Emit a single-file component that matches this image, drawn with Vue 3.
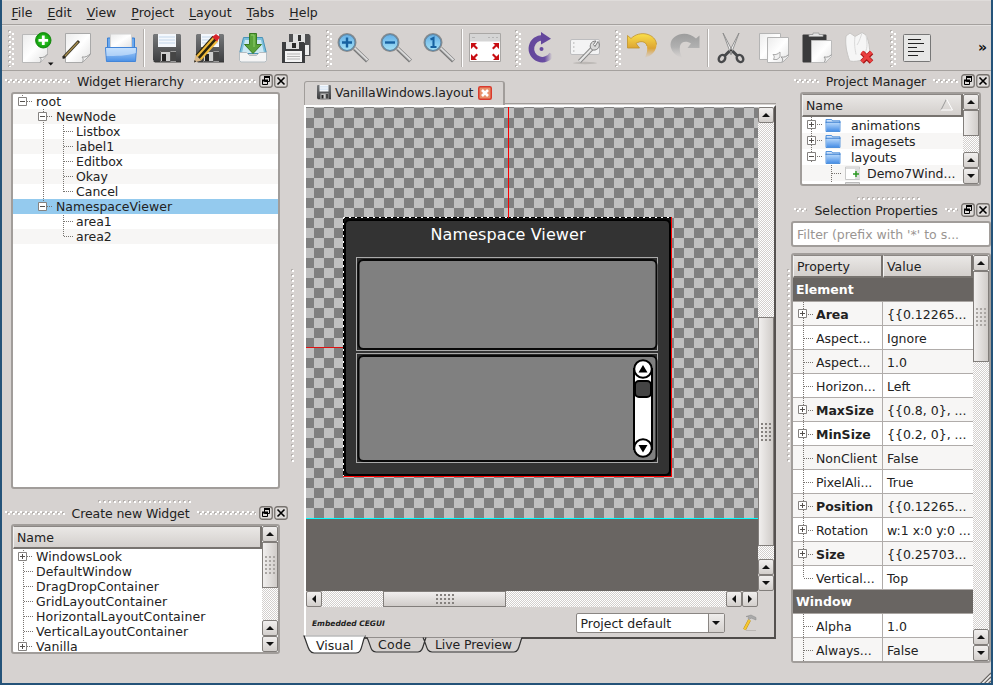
<script setup>
const menus = ['File', 'Edit', 'View', 'Project', 'Layout', 'Tabs', 'Help']

const toolbar = [
  'grip', 'new', 'edit', 'open', 'sep', 'save', 'saveas', 'import', 'saveall',
  'grip', 'zoomin', 'zoomout', 'zoomone', 'sep', 'fullscreen',
  'grip', 'reload', 'configure',
  'grip', 'undo', 'redo', 'sep', 'cut', 'copy', 'paste', 'delete',
  'grip', 'text',
]

const hierarchy = [
  { label: 'root', level: 0 },
  { label: 'NewNode', level: 1 },
  { label: 'Listbox', level: 2 },
  { label: 'label1', level: 2 },
  { label: 'Editbox', level: 2 },
  { label: 'Okay', level: 2 },
  { label: 'Cancel', level: 2 },
  { label: 'NamespaceViewer', level: 1, selected: true },
  { label: 'area1', level: 2 },
  { label: 'area2', level: 2 },
]

const widgets = [
  'WindowsLook', 'DefaultWindow', 'DragDropContainer', 'GridLayoutContainer',
  'HorizontalLayoutContainer', 'VerticalLayoutContainer', 'Vanilla',
]

const folders = ['animations', 'imagesets', 'layouts']

const properties = [
  { group: 'Element' },
  { name: 'Area', value: '{{0.12265...', open: true, bold: true },
  { name: 'Aspect...', value: 'Ignore' },
  { name: 'Aspect...', value: '1.0' },
  { name: 'Horizon...', value: 'Left' },
  { name: 'MaxSize', value: '{{0.8, 0}, ...', open: true, bold: true },
  { name: 'MinSize', value: '{{0.2, 0}, ...', open: true, bold: true },
  { name: 'NonClient', value: 'False' },
  { name: 'PixelAli...', value: 'True' },
  { name: 'Position', value: '{{0.12265...', open: true, bold: true },
  { name: 'Rotation', value: 'w:1 x:0 y:0 ...', open: true },
  { name: 'Size', value: '{{0.25703...', open: true, bold: true },
  { name: 'Vertical...', value: 'Top', last: true },
  { group: 'Window' },
  { name: 'Alpha', value: '1.0' },
  { name: 'Always...', value: 'False' },
]
</script>

<template>
  <div class="window">
    <svg class="defs" width="0" height="0">
      <defs>
        <linearGradient id="paper" x1="0" y1="0" x2="1" y2="1"><stop offset="0" stop-color="#ececec" /><stop offset=".5" stop-color="#fff" /><stop offset="1" stop-color="#e2e2e2" /></linearGradient>
        <linearGradient id="blue" x1="0" y1="0" x2="0" y2="1"><stop offset="0" stop-color="#b5d7fb" /><stop offset="1" stop-color="#4a90e6" /></linearGradient>
        <radialGradient id="green"><stop offset="0" stop-color="#43dd36" /><stop offset="1" stop-color="#0c9a08" /></radialGradient>
        <linearGradient id="lens" x1="0" y1="0" x2="0" y2="1"><stop offset="0" stop-color="#63aee6" /><stop offset="1" stop-color="#a5e2f6" /></linearGradient>
        <linearGradient id="gold" x1="0" y1="0" x2="0" y2="1"><stop offset="0" stop-color="#fbe04a" /><stop offset=".6" stop-color="#dda433" /><stop offset="1" stop-color="#d9a860" stop-opacity="0" /></linearGradient>
        <linearGradient id="silver" x1="0" y1="0" x2="0" y2="1"><stop offset="0" stop-color="#9c9c9c" /><stop offset=".55" stop-color="#b0b0b0" /><stop offset="1" stop-color="#bbb" stop-opacity="0" /></linearGradient>
        <linearGradient id="purple" x1="0" y1="0" x2="1" y2="0"><stop offset="0" stop-color="#64479c" /><stop offset=".65" stop-color="#6a4ea2" /><stop offset="1" stop-color="#6a4ea2" stop-opacity="0" /></linearGradient>
        <linearGradient id="steel" x1="0" y1="0" x2="0" y2="1"><stop offset="0" stop-color="#77797b" /><stop offset="1" stop-color="#3c3d3f" /></linearGradient>
        <symbol id="floppy" viewBox="0 0 32 32">
          <path d="M3 2h26l1 1v27H4l-2-2V3z" fill="url(#steel)" />
          <path d="M7 2h18v13H7z" fill="#f4f8fd" /><path d="M8 5h16M8 8h16M8 11h16" stroke="#c3d6ea" />
          <path d="M2 29h28v1.500H4z" fill="#3a3a3a" />
          <path d="M9 19h16v11H9z" fill="#f0f0f0" /><path d="M9.500 19.500h10v10h-10z" fill="#cfcfcf" stroke="#555" /><path d="M11 22h4v7h-4z" fill="#222" /><path d="M20 19.500h5v10h-5z" fill="#454545" />
        </symbol>
        <symbol id="glass" viewBox="0 0 32 32">
          <path d="M17.500 16.500 30.500 29" stroke="#777" stroke-width="4.200" /><path d="M17.500 16 30.500 28.300" stroke="#ddd" stroke-width="2.200" /><path d="M18 17.800 29.700 29.300" stroke="#989898" />
          <circle cx="10" cy="10.500" r="8.500" fill="url(#lens)" stroke="#8b8b8b" stroke-width="2" /><circle cx="10" cy="10.500" r="8" fill="none" stroke="#4d8ab8" stroke-width=".8" />
        </symbol>
        <symbol id="folder" viewBox="0 0 16 14">
          <path d="M.5 .5h6l1 1.500h8v11.500H.5z" fill="#cfe3fb" stroke="#3f86d8" /><path d="M1 4h14v9H1z" fill="url(#blue)" /><path d="M0 3.500h16" stroke="#2f77cc" />
        </symbol>
        <symbol id="float" viewBox="0 0 14 14">
          <rect x=".75" y=".75" width="12.500" height="12.500" rx="2.500" fill="#dedbd9" stroke="#77736f" stroke-width="1.300" />
          <path d="M5.500 2.500h5v5h-5zM3.500 6.500h5v4h-5z" fill="#dedbd9" stroke="#000" /><path d="M5 3h6M3 6.500h6" stroke="#000" stroke-width="2" />
        </symbol>
        <symbol id="close" viewBox="0 0 14 14">
          <rect x=".75" y=".75" width="12.500" height="12.500" rx="2.500" fill="#dedbd9" stroke="#77736f" stroke-width="1.300" />
          <path d="m3.500 3.500 7 7m0-7-7 7" stroke="#000" stroke-width="1.600" />
        </symbol>
        <symbol id="plusbox" viewBox="0 0 9 9"><path d="M.5 .5h8v8h-8z" fill="#fff" stroke="#858280" /><path d="M2 4.500h5M4.500 2v5" stroke="#55514e" /></symbol>
        <symbol id="minusbox" viewBox="0 0 9 9"><path d="M.5 .5h8v8h-8z" fill="#fff" stroke="#858280" /><path d="M2 4.500h5" stroke="#55514e" /></symbol>
      </defs>
    </svg>

    <nav class="menubar">
      <span v-for="m in menus" :key="m" class="menu"><u>{{ m[0] }}</u>{{ m.slice(1) }}</span>
    </nav>

    <div class="toolbar">
      <template v-for="(t, i) in toolbar" :key="i">
        <i v-if="t === 'grip'" class="tgrip"></i>
        <i v-else-if="t === 'sep'" class="tsep"></i>
        <svg v-else class="ticon" viewBox="0 0 32 32">
          <g v-if="t === 'new'">
            <path d="M3.500 2.500h25v20l-7 8h-18z" fill="url(#paper)" stroke="#b9b9b9" /><path d="M21 30.500c2-3 1-4-.5-5 4 .5 6-1 8-3.500" fill="#eee" stroke="#9b9b9b" />
            <circle cx="24.300" cy="8.300" r="7.700" fill="url(#green)" stroke="#16870f" /><path d="M24.300 3.500v9.600M19.500 8.300h9.600" stroke="#fff" stroke-width="2.800" />
            <path d="M29 30.500h5.500l-2.750 3z" fill="#111" />
          </g>
          <g v-else-if="t === 'edit'">
            <path d="M3.500 1.500h25v21l-8 8h-17z" fill="url(#paper)" stroke="#a9a9a9" /><path d="M20 30.500c2-3 1-4 0-5.500 4 .5 6-1 8.500-3.500" fill="#eee" stroke="#9b9b9b" />
            <path d="M1 26 17 9" stroke="#3a3424" stroke-width="3" /><path d="M3 24 16 10" stroke="#a8904f" stroke-width="1.200" /><path d="m.5 27 1-3 2 1.500z" fill="#222" />
          </g>
          <g v-else-if="t === 'open'">
            <path d="M2.500 6h27v12h-27z" fill="#6ba8ee" stroke="#3b7fd0" /><path d="M5.500 2h21v14h-21z" fill="url(#paper)" stroke="#d2d2d2" />
            <path d="M.5 15.500h31l-1 14h-29z" fill="url(#blue)" stroke="#4385d8" /><path d="M1 16h30v5c-10 3-20 3-29.500 3z" fill="#d3e7fd" opacity=".6" />
          </g>
          <use v-else-if="t === 'save'" href="#floppy" />
          <g v-else-if="t === 'saveas'">
            <use href="#floppy" /><path d="M4 25 21 6" stroke="#2b2610" stroke-width="6.500" /><path d="M3 24.500 19.500 6M6.500 27.500 23.500 8.500" stroke="#f0b93a" stroke-width="2" /><path d="m18 5 4-3 4 3-3 4.500z" fill="#d8242c" /><path d="M0 30.500 1.500 23l6 5.500z" fill="#d9b98a" /><path d="m0 30.500.6-2.500 1.600 1.500z" fill="#222" />
          </g>
          <g v-else-if="t === 'import'">
            <path d="M6.500 5.500h19l4 16h-27z" fill="#7dc0dc" stroke="#4993b8" /><path d="M8 8h16l3 13H5z" fill="#cbe8f4" />
            <path d="M2.500 20.500h7l3 3h7l3-3h7v8l-1.500 1.500h-24l-1.500-1.500z" fill="#f5f5f5" stroke="#b4bdc2" />
            <path d="M12.500 1.500h7v11h5L16 21.500l-8.500-9h5z" fill="#5aa43a" stroke="#3a7a22" /><path d="M14 3h3v12" stroke="#8fce6c" fill="none" />
          </g>
          <g v-else-if="t === 'saveall'">
            <path d="M9 2h20l1.500 2v20H9z" fill="#505153" /><path d="M13 2h12v9H13z" fill="#e0e0e0" /><path d="M18 3h3v6h-3z" fill="#333" /><path d="M24 13h5v10h-5z" fill="#eee" />
            <path d="M2 10h22l1 2v19H2z" fill="#3c3d3f" /><path d="M6 10h13v7H6z" fill="#ddd" /><path d="M12 11h4v5h-4z" fill="#2a2a2a" /><path d="M5 19h17v11H5z" fill="#f4f4f4" /><path d="M7 22h13M7 24.500h13M7 27h13" stroke="#b5b5b5" />
          </g>
          <g v-else-if="t === 'zoomin'"><use href="#glass" /><path d="M10 5.500v10M5 10.500h10" stroke="#1761a0" stroke-width="2.400" /></g>
          <g v-else-if="t === 'zoomout'"><use href="#glass" /><path d="M5 10.500h10" stroke="#1761a0" stroke-width="2.400" /></g>
          <g v-else-if="t === 'zoomone'"><use href="#glass" /><path d="m7.500 7.500 3-1.500v9M7.500 15h6" fill="none" stroke="#1761a0" stroke-width="2.100" /></g>
          <g v-else-if="t === 'fullscreen'">
            <path d="M.5 1.500h31v28H.5z" fill="#fff" stroke="#a9a7a5" /><path d="M1 2h30v7.500H1z" fill="#d5d5d5" /><path d="M3 5.500h3M19 5.500h2M23 5.500h2M27 5.500h2" stroke="#b5b5b5" />
            <path d="M2 11h6l-2 2 3 3-1.500 1.500-3-3L2 17zM30 11h-6l2 2-3 3 1.500 1.500 3-3 2.500 2.500zM2 28h6l-2-2 3-3L7.500 21.500l-3 3L2 22zM30 28h-6l2-2-3-3 1.500-1.500 3 3 2.500-2.500z" fill="#c80d12" />
          </g>
          <g v-else-if="t === 'reload'">
            <path d="M17 5.700A11 11 0 1 0 26 22" fill="none" stroke="url(#purple)" stroke-width="5.600" /><path d="M15 0v12.500L25 6.800z" fill="#64479c" /><circle cx="15.500" cy="17" r="2" fill="#64479c" />
          </g>
          <g v-else-if="t === 'configure'">
            <ellipse cx="16" cy="31" rx="12" ry="1.200" fill="#aaa6a3" opacity=".6" />
            <rect x="1.500" y="7.500" width="29" height="15" rx="1.500" fill="#f3f3f4" stroke="#bdbdbf" /><path d="M4 11h1.500M4 15h1.500M4 19h1.500" stroke="#aaa" />
            <path d="M10.500 29.500 23.500 16" stroke="#888" stroke-width="4" /><path d="M10.500 29.500 23.500 16" stroke="#e8e8e8" stroke-width="2" />
            <path d="M29 9.500c2.500 3 1.500 7.500-3 8.500-3.500.5-5.500-2-4.500-5.500.7-2.300 2.500-3.500 5.500-3.500l-2.500 3.500 1.500 2z" fill="#d9d9d9" stroke="#7d7d7d" />
          </g>
          <g v-else-if="t === 'undo'">
            <path d="M1.500 3.500v12.500h12L10 11.500C14 8.500 20 9 21 14c.7 4 0 8-2.500 12 7.500-2 12-7.500 12-13.500C30 2 14-2.500 5 6.500z" fill="url(#gold)" /><path d="M21 14C20 9 14 8.500 10 11.500l3.500 4.500h-12V3.500l3.500 3C14-2.500 30 2 30.500 12.500" fill="none" stroke="#c2932a" stroke-width=".8" />
          </g>
          <g v-else-if="t === 'redo'" transform="matrix(-1 0 0 1 32 0)">
            <path d="M1.500 3.500v12.500h12L10 11.500C14 8.500 20 9 21 14c.7 4 0 8-2.500 12 7.500-2 12-7.500 12-13.500C30 2 14-2.500 5 6.500z" fill="url(#silver)" />
          </g>
          <g v-else-if="t === 'cut'">
            <path d="m8 1 10 19-2 2.500zM24 1 14 20l2 2.500z" fill="#f2f2f2" stroke="#8a8a8a" stroke-width=".9" /><path d="m14.500 19-5 5M17.500 19l5 5" stroke="#48494b" stroke-width="3" />
            <ellipse cx="7" cy="26.500" rx="3" ry="3.800" transform="rotate(35 7 26.500)" fill="none" stroke="#48494b" stroke-width="2.400" /><ellipse cx="25" cy="26.500" rx="3" ry="3.800" transform="rotate(-35 25 26.500)" fill="none" stroke="#48494b" stroke-width="2.400" /><circle cx="16" cy="18.500" r="1" fill="#333" />
          </g>
          <g v-else-if="t === 'copy'">
            <path d="M1.500 1.500h21v25l-3 1h-18z" fill="url(#paper)" stroke="#b4b4b4" /><path d="M16 27c1-3 0-3.500-1-5" fill="none" stroke="#999" /><path d="M9.500 5.500h21v19l-6 6h-15z" fill="url(#paper)" stroke="#b4b4b4" /><path d="M24 30c1.500-3 .5-3.500-1-5 4 .5 5.500-.5 7.500-2.500" fill="#eee" stroke="#999" /><path d="M15.500 27.500c1.500-3 .5-3.500-.5-5 3 .5 5-.5 7-2.500v5l-3 2.500z" fill="#f1f1f1" stroke="#aaa" />
          </g>
          <g v-else-if="t === 'paste'">
            <rect x="1.500" y="2.500" width="24" height="28" rx="1" fill="#3a3a3b" /><path d="M8 4.500V2.500h4V1h6v1.500h4v2z" fill="#e4e4e4" stroke="#999" stroke-width=".8" /><path d="M10.500 8.500h20v16l-6 6h-14z" fill="url(#paper)" stroke="#bbb" /><path d="M23.500 30c1.500-3 .5-3.500-.5-5 4 .5 5.500-.5 7.500-2.500" fill="#eee" stroke="#999" />
          </g>
          <g v-else-if="t === 'delete'">
            <path d="M2 4 6 1l5 3.500L18 .5l4 2.500c3 7 4 12 3.500 20-.5 5-18 8-20 5.500C2.500 20 1 12 2 4z" fill="#f6f6f6" stroke="#c8c6c4" /><path d="M11 4.500c-1 8 0 12 1 18M18 1c-2 6-3 9-5 12M22 3c1 7 2 12-1 18" fill="none" stroke="#dadada" />
            <path d="m18 20.500 9.500 9.500M27.500 20.500 18 30" stroke="#a51515" stroke-width="5" /><path d="m17.800 20 9.700 9.700M27.500 20l-9.700 9.700" stroke="#ea4040" stroke-width="3.200" />
          </g>
          <g v-else-if="t === 'text'">
            <rect x="2.500" y="2.500" width="27" height="27" rx="1" fill="#e7e7e6" stroke="#777" /><path d="M7 7.500h13M7 11.500h16M7 15.500h9M7 19.500h16M7 23.500h10" stroke="#222" stroke-width="1.200" />
          </g>
        </svg>
      </template>
      <span class="more">»</span>
    </div>

    <main class="body">
      <section class="left">
        <header class="dock"><i class="zig"></i><b>Widget Hierarchy</b><i class="zig"></i><svg><use href="#float" /></svg><svg><use href="#close" /></svg></header>
        <div class="box hier">
          <ul class="list">
            <li v-for="n in hierarchy" :key="n.label" :class="['lv' + n.level, { sel: n.selected }]">{{ n.label }}</li>
          </ul>
          <svg class="lines" width="80" height="150">
            <g class="dots"><path d="M9.500 1v2M14 7.500h6M30.500 15v3M30.500 28v80M34 22.500h6M50.500 31v67M51 37.500h9M51 52.500h9M51 67.500h9M51 82.500h9M51 97.500h9M34 112.500h6M50.500 121v22M51 127.500h9M51 142.500h9" /></g>
            <use href="#minusbox" x="5" y="3" width="9" height="9" /><use href="#minusbox" x="25" y="18" width="9" height="9" /><use href="#minusbox" x="25" y="108" width="9" height="9" />
          </svg>
        </div>
        <i class="hdots"></i>
        <header class="dock second"><i class="zig"></i><b>Create new Widget</b><i class="zig"></i><svg><use href="#float" /></svg><svg><use href="#close" /></svg></header>
        <div class="box create">
          <div class="pane">
            <div class="th">Name</div>
            <div class="stack">
              <ul class="list"><li v-for="w in widgets" :key="w" class="lv0">{{ w }}</li></ul>
              <svg class="lines" width="40" height="103">
                <g class="dots"><path d="M10.500 1v95M14 7.500h6M11 22.500h9M11 37.500h9M11 52.500h9M11 67.500h9M11 82.500h9M14 97.500h6" /></g>
                <use href="#plusbox" x="5" y="3" width="9" height="9" /><use href="#plusbox" x="5" y="93" width="9" height="9" />
              </svg>
            </div>
          </div>
          <div class="sb"><i class="btn up"></i><i class="thumb t46 ribbed"></i><i class="trough"></i><i class="btn up"></i><i class="btn down"></i></div>
        </div>
      </section>

      <i class="vdots"></i>

      <section class="center">
        <div class="tabs">
          <div class="tab"><svg width="16" height="16"><use href="#floppy" width="16" height="16" /></svg><span>VanillaWindows.layout</span>
            <svg width="14" height="14" viewBox="0 0 14 14"><rect x=".75" y=".75" width="12.500" height="12.500" rx="1.500" fill="#e8906a" stroke="#d9392c" stroke-width="1.500" /><path d="m4 4 6 6m0-6-6 6" stroke="#fff" stroke-width="2.600" /></svg>
          </div>
          <i class="rest"></i>
        </div>
        <div class="frame">
          <div class="view">
            <svg class="scene" width="452" height="484">
              <path d="M0 240.500h37" stroke="#e01010" />
              <rect x="37" y="110" width="329" height="259" fill="#111" />
              <rect x="39" y="113" width="325" height="255" rx="5" fill="#333" stroke="#000" stroke-width="2" />
              <path d="M37 110.500h329M37.500 110v259" stroke="#000" /><path d="M37 110.500h329M37.500 110v259" stroke="#fff" stroke-dasharray="2 4" />
              <g fill="#808080">
                <rect x="50.500" y="150.500" width="301" height="93" fill="#2b2b2b" stroke="#aaa" /><rect x="52.500" y="153" width="298" height="89" rx="5" stroke="#080808" stroke-width="2" />
                <rect x="50.500" y="246.500" width="301" height="109" fill="#2b2b2b" stroke="#aaa" /><rect x="52.500" y="249" width="298" height="105" rx="5" stroke="#080808" stroke-width="2" />
              </g>
              <path d="M365.500 110v260M37 369.500h329" stroke="#f00" />
              <path d="M202.500 0v111" stroke="#f00" />
              <text x="124.500" y="133" textLength="155" class="caption">Namespace Viewer</text>
              <rect x="328" y="262" width="18" height="80" fill="#fff" stroke="#000" stroke-width="2" />
              <circle cx="337" cy="262" r="8.800" fill="#fff" stroke="#000" stroke-width="2" /><circle cx="337" cy="341" r="8.800" fill="#fff" stroke="#000" stroke-width="2" />
              <path d="m337 258 4.500 7.500h-9zM337 345.500l4.500-7.500h-9z" fill="#000" />
              <rect x="329" y="274" width="16" height="16" rx="4" fill="#444" stroke="#000" stroke-width="2" />
              <path d="M0 411.500h452" stroke="#0ff" /><path d="M0 412h452v72H0z" fill="#696562" />
            </svg>
            <div class="sb"><i class="btn up"></i><i class="trough fix194"></i><i class="thumb t229 ribbed dark"></i><i class="trough"></i><i class="btn up"></i><i class="btn down"></i></div>
          </div>
          <div class="hsb"><i class="btn lft"></i><i class="trough w61"></i><i class="thumb w123 ribbed dark"></i><i class="trough"></i><i class="btn lft"></i><i class="btn rgt"></i></div>
          <div class="status">
            <em>Embedded CEGUI</em>
            <div class="combo"><span>Project default</span><i></i></div>
            <svg width="16" height="18" viewBox="0 0 16 18"><path d="M4 16.500h10" stroke="#bbb7b4" /><path d="M2.500 15.500 7.500 6" stroke="#b98a12" stroke-width="3" /><path d="M2.500 15.500 7.500 6" stroke="#f6c832" stroke-width="2.200" /><path d="M4 2.500 9 1l3 1.500 2 1v2.500l-2.500-1L9 4 7.500 5.500 6 4.500 7 3z" fill="#aaa" stroke="#888" stroke-width=".5" /></svg>
          </div>
        </div>
        <svg class="modes" width="240" height="20">
          <path d="M63 .5c4 8 3 14 9 14.500h42c5 0 5-7 8-14.500M119 .5c4 8 3 14 9 14.500h82c5 0 5-7 8-14.500" class="modetab" />
          <path d="M0-1C4 8 4 15.500 10 16h42c6 0 5-7 9-17z" class="modetab active" />
          <path d="M1-1h60" stroke="#fff" />
          <text x="12" y="12.500" textLength="37.500">Visual</text><text x="74" y="11.500" textLength="33">Code</text><text x="131" y="11.500" textLength="77">Live Preview</text>
        </svg>
      </section>

      <i class="vdots r"></i>

      <section class="right">
        <header class="dock pm"><i class="zig"></i><b>Project Manager</b><i class="zig"></i><svg><use href="#float" /></svg><svg><use href="#close" /></svg></header>
        <div class="box files">
          <div class="pane">
            <div class="th">Name<svg width="14" height="13"><path d="M1 12 6.500 1" stroke="#999" /><path d="m6.500 1 6 11H1" fill="none" stroke="#fff" /></svg></div>
            <div class="stack">
              <ul class="list tall">
                <li v-for="f in folders" :key="f"><svg width="16" height="13"><use href="#folder" width="16" height="13" /></svg>{{ f }}</li>
                <li class="file"><svg width="16" height="15"><path d="M.5 1h14v12.500H.5z" fill="#fff" stroke="#c9c9c9" /><path d="M1 1h13v2H1zM10 3h5v10h-5z" fill="#ddd" /><path d="M11 5v6M8 8h6" stroke="#2c9a24" stroke-width="1.500" /></svg>Demo7Wind...</li>
                <li class="file"><svg width="16" height="15"><path d="M.5 .5h14v12.500H.5z" fill="#ddd" stroke="#bbb" /></svg></li>
              </ul>
              <svg class="lines" width="60" height="66">
                <g class="dots"><path d="M9.500 0v45M15 7.500h5M15 23.500h5M15 39.500h5M29.500 48v18M30 56.500h9" /></g>
                <use href="#plusbox" x="5" y="3" width="9" height="9" /><use href="#plusbox" x="5" y="19" width="9" height="9" /><use href="#minusbox" x="5" y="35" width="9" height="9" />
              </svg>
            </div>
          </div>
          <div class="sb"><i class="btn up"></i><i class="thumb t26"></i><i class="trough"></i><i class="btn up"></i><i class="btn down"></i></div>
        </div>
        <i class="hdots short"></i>
        <header class="dock sp"><i class="zig"></i><b>Selection Properties</b><i class="zig"></i><svg><use href="#float" /></svg><svg><use href="#close" /></svg></header>
        <div class="filter">Filter (prefix with '*' to s...</div>
        <div class="box props">
          <div class="pane">
            <div class="cols"><div class="th">Property</div><div class="th">Value</div></div>
            <template v-for="(p, i) in properties" :key="i">
              <div v-if="p.group" class="group">{{ p.group }}</div>
              <div v-else :class="['prop', { odd: i % 2, bold: p.bold }]">
                <svg width="23" height="24"><g class="dots"><path :d="p.last ? 'M10.500 0v12' : 'M10.500 0v24'" /><path :d="p.open ? 'M15 12.500h6' : 'M11 12.500h10'" /></g><use v-if="p.open" href="#plusbox" x="5" y="7" width="9" height="9" /></svg>
                <span class="pname">{{ p.name }}</span><span class="pval">{{ p.value }}</span>
              </div>
            </template>
          </div>
          <div class="sb"><i class="btn up"></i><i class="thumb t91 ribbed"></i><i class="trough"></i><i class="btn up"></i><i class="btn down"></i></div>
        </div>
        <svg class="resize" width="13" height="13"><path d="M1 13 13 1M5 13l8-8M9 13l4-4" stroke="#6a6663" stroke-width="1.300" /><path d="M2.500 13 13 2.500M6.500 13 13 6.500M10.500 13l2.500-2.500" stroke="#fff" /></svg>
      </section>
    </main>
  </div>
</template>

<style>
html, body { margin: 0; overflow: hidden; background: #d6d2d0; }
</style>

<style scoped>
* { box-sizing: border-box; }
.window { width: 993px; height: 685px; display: flex; flex-direction: column; overflow: hidden; background: #d6d2d0; border: solid #245379; border-width: 0 2px 2px; font: 12.5px/15px "DejaVu Sans", sans-serif; color: #222; }
.defs { display: block; flex: none; height: 0; }
svg { display: block; flex: none; }
ul { margin: 0; padding: 0; list-style: none; }
i { display: block; font-style: normal; }

.menubar { flex: none; height: 25px; display: flex; gap: 15px; padding: 4px 0 0 9.500px; border-top: 1px solid #dfdcda; border-bottom: 1px solid #a5a19e; }
.menu u { text-underline-offset: 2px; }
.toolbar { flex: none; height: 46px; display: flex; align-items: flex-start; border-top: 1px solid #e3e0de; border-bottom: 1px solid #a5a19e; }
.ticon { width: 32px; height: 32px; margin: 6px 6px 0 5px; overflow: visible; }
.tgrip { flex: none; width: 6px; height: 37px; margin: 4px 0 0 8px; background: conic-gradient(from 0deg at 2px 2px, transparent 75%, #fff 0) 1px 1px / 6px 5px, conic-gradient(from 0deg at 2px 2px, transparent 75%, #b5b1ae 0) 0 0 / 6px 5px, conic-gradient(from 0deg at 2px 2px, transparent 75%, #fff 0) 4px 3px / 6px 5px; }
.tgrip:first-child { margin-left: 6px; }
.tsep { flex: none; width: 2px; height: 38px; margin: 3px 1px 0 0; background: linear-gradient(90deg, #b3afac 50%, #fff 50%); }
.more { margin: 14px 0 0 39px; font-size: 14px; font-weight: bold; color: #111; }

.body { flex: 1; min-height: 0; display: flex; }
.left { width: 288px; padding-left: 3px; }
.dock { display: flex; align-items: flex-start; height: 21px; padding-top: 3px; }
.left .dock { padding-right: 1px; }
.dock b { font-weight: normal; padding: 0 7px; white-space: nowrap; line-height: 16px; letter-spacing: -.08px; }
.dock svg { width: 14px; height: 14px; margin-right: 1px; }
.zig { flex: 1; height: 5px; margin-top: 5px; background: conic-gradient(from 0deg at 2px 2px, transparent 75%, #fff 0) 3px 2px / 5px 9px, conic-gradient(from 0deg at 2px 2px, transparent 75%, #fff 0) 0 0 / 5px 9px, conic-gradient(from 0deg at 2px 2px, transparent 75%, #b5b1ae 0) 2px 1px / 5px 9px; }
.zig + svg { margin-left: 3px; }
.box { display: flex; border: 2px solid #a19d9a; border-radius: 3px; background: #fff; overflow: hidden; }
.hier { display: grid; width: 269px; height: 397px; margin-left: 6px; align-items: start; }
.hier > *, .stack > * { grid-area: 1 / 1; }
.list li { height: 15px; white-space: nowrap; }
.create .list { letter-spacing: .08px; }
.hier li:nth-child(even) { background: #f7f6f5; }
.lv0 { padding-left: 23px; }
.lv1 { padding-left: 43px; }
.lv2 { padding-left: 63px; }
.hier li.sel { background: #94caee; }
.dots { fill: none; stroke: #77736f; stroke-dasharray: 1 1; }
.hdots { width: 94px; height: 3px; margin: 11px 0 1px 93px; background: conic-gradient(from 0deg at 2px 2px, transparent 75%, #fff 0) 1px 1px / 5px 5px, conic-gradient(from 0deg at 2px 2px, transparent 75%, #b5b1ae 0) 0 0 / 5px 5px; }
.second { padding-top: 2px; height: 20px; }
.create { width: 269px; height: 130px; margin-left: 6px; }
.pane { flex: 1; min-width: 0; height: 100%; overflow: hidden; }
.th { display: flex; justify-content: space-between; height: 23px; padding: 3px 3px 0; background: linear-gradient(#eae8e6, #d3cfcc); border: 1px solid #777370; border-width: 1px 2px 2px 1px; border-color: #8b8784 #77736f #77736f #f4f3f2; }
.stack { display: grid; align-items: start; }

.sb { flex: none; width: 16px; display: flex; flex-direction: column; }
.hsb { width: 452px; height: 16px; display: flex; }
.btn { flex: none; width: 16px; height: 16px; display: grid; place-items: center; background: linear-gradient(#f1efee, #d3cfcc); border: 1px solid #827e7b; border-radius: 2px; }
.btn::before { content: ""; border: 4px solid transparent; }
.up::before { border-width: 0 4px 4px; border-bottom-color: #111; }
.down::before { border-width: 4px 4px 0; border-top-color: #111; }
.lft::before { border-width: 4px 4px 4px 0; border-right-color: #111; }
.rgt::before { border-width: 4px 0 4px 4px; border-left-color: #111; }
.trough { flex: 1; background: conic-gradient(#fff 25%, #d3cfcd 0 50%, #fff 0 75%, #d3cfcd 0) 0 0 / 2px 2px; }
.thumb { flex: none; display: grid; place-items: center; background: linear-gradient(90deg, #f1efee, #d0ccc9); border: 1px solid #827e7b; }
.hsb .thumb { background: linear-gradient(#f1efee, #d0ccc9); }
.ribbed::before { content: ""; width: 11px; height: 18px; background: conic-gradient(from 0deg at 2px 2px, transparent 75%, #aaa6a3 0) 0 0 / 4px 4px; }
.dark::before { background: conic-gradient(from 0deg at 2px 2px, transparent 75%, #85817e 0) 0 0 / 4px 4px; }
.hsb .ribbed::before { width: 18px; height: 11px; }
.t46 { height: 46px; }
.t26 { height: 26px; }
.t91 { height: 91px; }
.t229 { height: 229px; }
.fix194 { flex: none; height: 194px; }
.w61 { flex: none; width: 61px; }
.w123 { width: 123px; }

.vdots { flex: none; width: 4px; height: 194px; margin: 198px 9px 0 1px; background: conic-gradient(from 0deg at 2px 2px, transparent 75%, #fff 0) 1px 1px / 5px 5px, conic-gradient(from 0deg at 2px 2px, transparent 75%, #b5b1ae 0) 0 0 / 5px 5px; }
.vdots.r { margin: 198px 0 0 11px; }

.center { flex: none; width: 472px; display: flex; flex-direction: column; }
.tabs { flex: none; height: 34px; display: flex; align-items: flex-end; }
.tab { width: 201px; height: 24px; display: flex; align-items: flex-start; padding: 2px 0 0 11px; border: solid #a19d9a; border-width: 1px 2px 0 1px; border-radius: 3px 3px 0 0; }
.tab span { flex: none; width: 138px; margin: 0 4px 0 3px; line-height: 17px; letter-spacing: -.08px; white-space: nowrap; }
.tab svg:last-child { margin: 2px 0 0 1px; }
.rest { flex: 1; height: 2px; border-top: 1px solid #a19d9a; }
.frame { height: 534px; border: solid; border-width: 2px; border-color: #fff #55514f #4e4b49 #fff; }
.view { display: flex; height: 484px; }
.scene { background: conic-gradient(#808080 25%, #c0c0c0 0 50%, #808080 0 75%, #c0c0c0 0) -2px 1px / 20px 20px; }
.caption { font-size: 16px; fill: #fff; }
.status { display: flex; align-items: center; height: 32px; padding: 0 16.500px 0 6px; }
.status em { flex: 1; font-size: 7.500px; font-weight: bold; }
.combo { display: flex; width: 149px; height: 20px; margin-right: 17px; background: #fff; border: 1px solid #8a8683; border-radius: 2px; }
.combo span { flex: 1; padding: 2px 0 0 4px; line-height: 15px; white-space: nowrap; }
.combo i { width: 16px; display: grid; place-items: center; background: linear-gradient(#efedec, #d5d1ce); border-left: 1px solid #8a8683; }
.combo i::before { content: ""; border: solid transparent; border-width: 4px 4px 0; border-top-color: #111; }
.modes { margin-top: -2px; overflow: visible; }
.modetab { fill: #d6d2d0; stroke: #333; stroke-width: 1.200; }
.modetab.active { fill: #fff; }
.modes text { fill: #222; }

.right { flex: none; width: 200px; }
.right .dock { padding-left: 3px; }
.files { width: 181px; height: 94px; margin-left: 9px; }
.files .th svg { margin-right: 4px; }
.tall li { display: flex; align-items: center; gap: 10px; height: 16px; padding-left: 23px; }
.tall li:nth-child(even) { background: #f7f6f5; }
.tall li.file { padding-left: 43px; gap: 6px; }
.hdots.short { width: 64px; margin: 11px 0 0 66px; }
.sp { height: 21px; }
.filter { height: 26px; padding: 4px 0 0 4px; background: #fff; border: 2px solid #a19d9a; border-radius: 3px; color: #999592; white-space: nowrap; }
.props { height: 410px; margin-top: 6px; }
.cols { display: grid; grid-template-columns: 90px 1fr; }
.group { height: 24px; padding: 4px 0 0 3px; background: #696562; border-bottom: 1px solid #a9a5a2; color: #fff; font-weight: bold; }
.prop { display: grid; grid-template-columns: 23px 66px 1fr; height: 24px; border-bottom: 1px solid #b0acaa; line-height: 25px; white-space: nowrap; }
.prop.odd { background: #f7f6f5; }
.bold .pname { font-weight: bold; }
.pval { padding-left: 4px; border-left: 1px solid #b0acaa; overflow: hidden; }
.pname { overflow: hidden; }
.resize { margin: 9px 0 0 187px; }
</style>
